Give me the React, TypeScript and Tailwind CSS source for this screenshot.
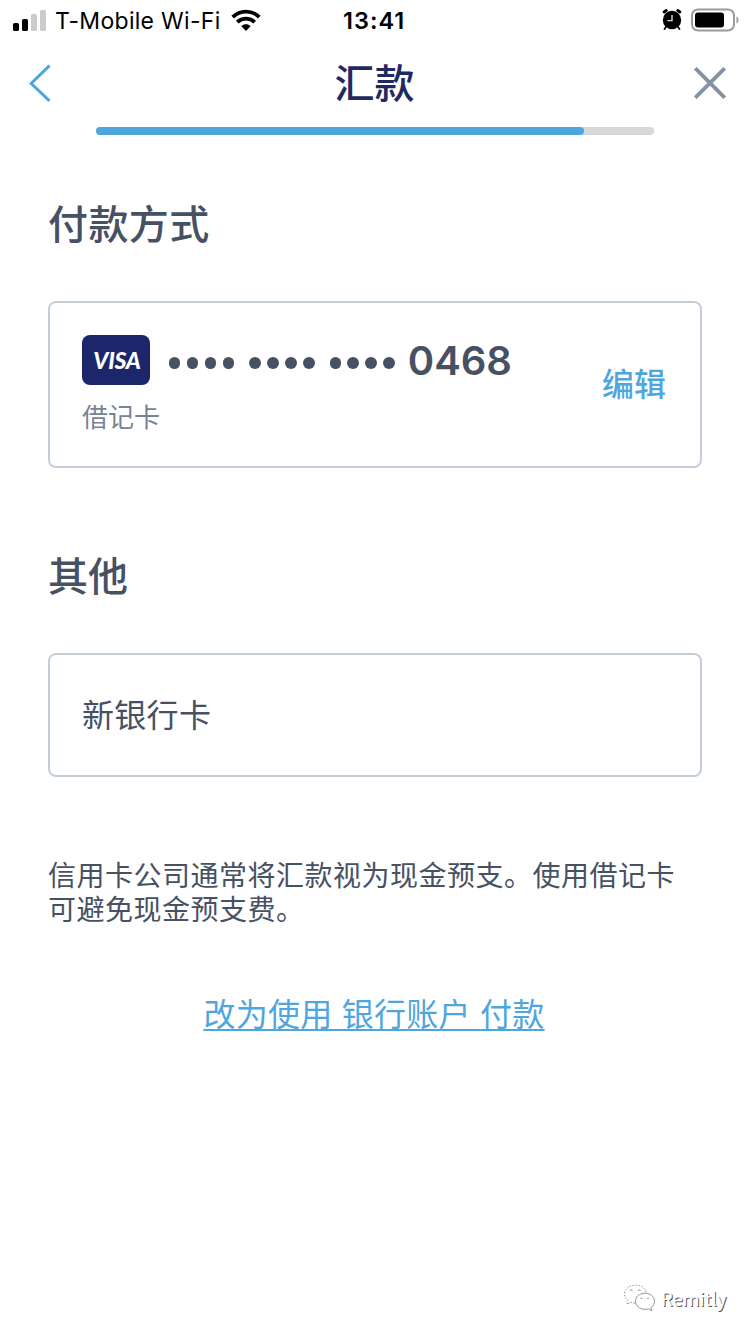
import React from "react";

function StatusBar() {
  return (
    <div className="flex h-10 items-center text-black">
      <svg className="ml-[13px] h-[21px] w-[34px] shrink-0" viewBox="0 0 34 21">
        <rect x="0" y="13" width="6" height="8" rx="1.6" fill="#000" />
        <rect x="9" y="9" width="6" height="12" rx="1.6" fill="#000" />
        <rect x="18" y="4" width="6" height="17" rx="1.6" fill="#cbcbcb" />
        <rect x="27" y="0" width="6" height="21" rx="1.6" fill="#cbcbcb" />
      </svg>
      <span className="ml-2 mt-0.5 w-[167px] whitespace-nowrap text-[23px] leading-10 tracking-[0.3px]">T-Mobile Wi-Fi</span>
      <svg className="ml-[9px] h-[22px] w-[30px] shrink-0" viewBox="0 0 30 22" fill="none" stroke="#000" strokeWidth="3.8">
        <path d="M1.7 8.2C9 .8 21 .8 28.3 8.2" />
        <path d="M6.3 13.2c4.8-4.7 12.6-4.7 17.4 0" />
        <path d="M10.4 17.2c2.5-2.5 6.7-2.5 9.2 0L15 22z" fill="#000" stroke="none" />
      </svg>
      <span className="ml-[82px] mt-0.5 w-16 whitespace-nowrap text-[23.5px] font-semibold leading-10 tracking-[1px]">13:41</span>
      <svg className="ml-auto h-[22px] w-5 shrink-0" viewBox="0 0 20 22">
        <g stroke="#000" strokeWidth="3" strokeLinecap="round">
          <path d="M2.2 3L4.2 1.6M17.8 3l-2-1.4" />
          <path d="M4 18l-1.5 2M16 18l1.5 2" strokeWidth="1.8" />
        </g>
        <circle cx="10" cy="11" r="9.2" fill="#000" />
        <path d="M10 6v5.6H5.4" fill="none" stroke="#ddd" strokeWidth="1.4" />
      </svg>
      <svg className="ml-[9px] mr-[10px] h-6 w-[49px] shrink-0" viewBox="0 0 49 24">
        <rect x="1" y="1.5" width="42" height="21" rx="6" fill="none" stroke="#9a9a9a" strokeWidth="2" />
        <rect x="4" y="4.5" width="29" height="15" rx="3" fill="#000" />
        <path d="M45.5 8.5c2.7 1 2.7 6 0 7z" fill="#9a9a9a" />
      </svg>
    </div>
  );
}

function Header() {
  return (
    <header>
      <div className="flex h-[87px] items-center justify-between pl-7 pr-6">
        <svg className="mb-0.5 h-10 w-8" viewBox="0 0 32 40" fill="none" stroke="#4fa6df" strokeWidth="3">
          <path d="M21.5 2.7L3.2 20.5l18.3 17.3" />
        </svg>
        <h1 className="mr-[5px] whitespace-nowrap text-[40px] font-medium leading-[60px] text-[#1f2a60]">汇款</h1>
        <svg className="mb-0.5 h-8 w-8" viewBox="0 0 32 32" fill="none" stroke="#8492a3" strokeWidth="3.8">
          <path d="M1.3 1.3l29.4 29.4M30.7 1.3L1.3 30.7" />
        </svg>
      </div>
      <div className="mx-24 h-2 rounded-full bg-[#d8d8d8]">
        <div className="h-2 w-[488px] rounded-full bg-[#4fa6df]" />
      </div>
    </header>
  );
}

function Dots() {
  return (
    <span className="flex gap-[6.7px]">
      {[0, 1, 2, 3].map((i) => (
        <i key={i} className="size-[11.3px] rounded-full bg-[#465163]" />
      ))}
    </span>
  );
}

function PaymentCard() {
  return (
    <div className="flex h-[167px] items-center justify-between rounded-lg border-2 border-[#c4ced9] pl-8 pr-[34px]">
      <div className="flex h-[99px] flex-col">
        <div className="flex h-[50px] items-center">
          <div className="flex h-[50px] w-[68px] items-center justify-center rounded-lg bg-[#1c266b] pl-0.5">
            <span className="font-['Lato'] text-[23px] font-black italic leading-none tracking-[-0.3px] text-white">VISA</span>
          </div>
          <div className="ml-[19px] mt-[6px] flex gap-[15px]">
            <Dots />
            <Dots />
            <Dots />
          </div>
          <span className="ml-[13px] mt-0.5 text-[40px] font-semibold leading-[50px] text-[#465163]">0468</span>
        </div>
        <span className="mt-[13px] whitespace-nowrap text-[26px] leading-[39px] text-[#778393]">借记卡</span>
      </div>
      <button className="whitespace-nowrap text-[32px] font-medium leading-[48px] text-[#4fa6df]">编辑</button>
    </div>
  );
}

function Watermark() {
  return (
    <footer className="mb-5 ml-[623px] mt-auto flex h-8 items-center">
      <svg className="h-[30px] w-8" viewBox="0 0 32 30" fill="none" stroke="#888" strokeWidth="0.9">
        <path d="M12 20c-2 0-3-.2-4.5-.8L4 21.5l.8-4C-1.5 12 1.5 4 10 2.4 17 1 23 5 23.2 10" strokeDasharray="1.5 1.5" />
        <path d="M22 10.2c5.5 0 9.5 3.7 9.5 8 0 2.7-1.2 4.8-3.4 6.3l.8 3.2-3.5-1.8C18.5 27.7 12.5 23.8 12.5 18c0-4.3 4-7.8 9.5-7.8z" />
        <path d="M7 8c.5-1.5 2-1.5 2.5 0M15 8c.5-1.5 2-1.5 2.5 0M17.5 16c.4-1.2 1.6-1.2 2 0M24 16c.4-1.2 1.6-1.2 2 0" />
      </svg>
      <span className="ml-[6px] font-['Noto_Sans_CJK_SC'] text-[18.5px] leading-8 tracking-[-0.1px] text-white [text-shadow:1px_1px_0.5px_#555]">Remitly</span>
    </footer>
  );
}

export default function App() {
  return (
    <div className="flex h-[1334px] w-[750px] flex-col overflow-hidden bg-white font-['Inter','Noto_Sans_CJK_SC',sans-serif] text-[#465163]">
      <StatusBar />
      <Header />
      <main className="px-12">
        <h2 className="mt-[60px] text-[40px] font-medium leading-[60px] tracking-[0.4px]">付款方式</h2>
        <div className="mt-[46px]"><PaymentCard /></div>
        <h2 className="mt-[79px] text-[40px] font-medium leading-[60px]">其他</h2>
        <button className="mt-[46px] flex h-[124px] w-full items-center rounded-lg border-2 border-[#c4ced9] pl-8 pt-0.5 text-[32px] leading-[48px] tracking-[0.3px]">新银行卡</button>
        <p className="mt-[82px] whitespace-nowrap text-[28px] leading-[34px] tracking-[0.5px]">
          信用卡公司通常将汇款视为现金预支。使用借记卡<br />可避免现金预支费。
        </p>
        <div className="mt-[64px] text-center text-[32px] leading-[48px] tracking-[0.27px] text-[#4fa6df]">
          <a className="mr-0.5 whitespace-nowrap underline decoration-2 underline-offset-[3px] [text-decoration-skip-ink:none]">改为使用 银行账户 付款</a>
        </div>
      </main>
      <Watermark />
    </div>
  );
}
